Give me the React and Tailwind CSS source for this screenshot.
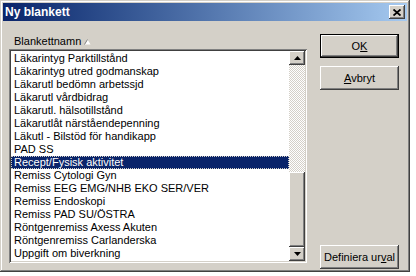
import React from "react";

const items = [
  "Läkarintyg Parktillstånd",
  "Läkarintyg utred godmanskap",
  "Läkarutl bedömn arbetssjd",
  "Läkarutl vårdbidrag",
  "Läkarutl. hälsotillstånd",
  "Läkarutlåt närståendepenning",
  "Läkutl - Bilstöd för handikapp",
  "PAD SS",
  "Recept/Fysisk aktivitet",
  "Remiss Cytologi Gyn",
  "Remiss EEG EMG/NHB EKO SER/VER",
  "Remiss Endoskopi",
  "Remiss PAD SU/ÖSTRA",
  "Röntgenremiss Axess Akuten",
  "Röntgenremiss Carlanderska",
  "Uppgift om biverkning",
];

const raised =
  "bg-[#d4d0c8] shadow-[inset_-1px_-1px_#404040,inset_1px_1px_#fff,inset_-2px_-2px_#808080,inset_2px_2px_#d4d0c8]";

const Button = ({ children, isDefault }) => (
  <div className={isDefault ? "h-[24px] border border-black" : "h-[24px]"}>
    <div
      className={`${raised} h-full flex items-center justify-center text-[11px] text-black`}
    >
      {children}
    </div>
  </div>
);

const Arrow = ({ up }) => (
  <svg width="7" height="4" viewBox="0 0 7 4">
    <polygon points={up ? "3.5,0 7,4 0,4" : "0,0 7,0 3.5,4"} fill="#000" />
  </svg>
);

export default function App() {
  return (
    <div
      className="w-[416px] h-[276px] bg-white"
      style={{ fontFamily: '"Liberation Sans", Arial, sans-serif' }}
    >
      {/* Window */}
      <div className="w-[410px] h-[272px] p-[3px] bg-[#d4d0c8] shadow-[inset_-1px_-1px_#404040,inset_1px_1px_#d4d0c8,inset_-2px_-2px_#808080,inset_2px_2px_#fff] flex flex-col">
        {/* Title bar */}
        <div className="h-[18px] flex items-center justify-between pl-[2px] pr-[2px] bg-gradient-to-r from-[#0a246a] to-[#a6caf0]">
          <span className="text-[12px] font-bold text-white leading-none">
            Ny blankett
          </span>
          <div className={`${raised} w-[16px] h-[14px] flex items-center justify-center`}>
            <svg width="8" height="7" viewBox="0 0 8 7">
              <path d="M0.5 0.5 L7.5 6.5 M7.5 0.5 L0.5 6.5" stroke="#000" strokeWidth="1.8" />
            </svg>
          </div>
        </div>

        {/* Body */}
        <div className="flex-1 flex gap-[13px] pl-[6px] pt-[13px]">
          <div className="flex flex-col w-[298px]">
            <div className="h-[15px] flex items-center pl-[5px] gap-[3px] text-[11px] text-black">
              <span>Blankettnamn</span>
              <svg width="7" height="6" viewBox="0 0 7 6">
                <polygon points="3.5,0.5 6.5,5.5 0.5,5.5" fill="#fff" />
                <path d="M3.5 0.5 L0.5 5.5" stroke="#808080" strokeWidth="1" />
              </svg>
            </div>

            {/* List box */}
            <div className="h-[214px] p-[2px] bg-white shadow-[inset_1px_1px_#808080,inset_-1px_-1px_#fff,inset_2px_2px_#404040,inset_-2px_-2px_#d4d0c8] flex">
              <div className="flex-1 pt-[1px] overflow-hidden">
                {items.map((item) => {
                  const selected = item === "Recept/Fysisk aktivitet";
                  return (
                    <div
                      key={item}
                      className={`h-[13px] flex items-center pl-[3px] text-[11px] whitespace-nowrap ${
                        selected
                          ? "bg-[#0a246a] text-white outline-1 outline-dotted outline-[#d4d0c8] -outline-offset-1"
                          : "text-black"
                      }`}
                    >
                      {item}
                    </div>
                  );
                })}
              </div>

              {/* Scrollbar */}
              <div className="w-[16px] flex flex-col bg-[repeating-conic-gradient(#fff_0_25%,#d4d0c8_0_50%)] bg-[length:2px_2px]">
                <div className={`${raised} h-[14px] flex items-center justify-center`}>
                  <Arrow up />
                </div>
                <div className="h-[107px]" />
                <div className={`${raised} h-[75px]`} />
                <div className={`${raised} h-[14px] flex items-center justify-center`}>
                  <Arrow />
                </div>
              </div>
            </div>
          </div>

          {/* Buttons */}
          <div className="w-[79px] flex flex-col">
            <Button isDefault>
              O<span className="underline">K</span>
            </Button>
            <div className="mt-[8px]">
              <Button>
                <span className="underline">A</span>vbryt
              </Button>
            </div>
            <div className="mt-auto">
              <Button>
                Definiera ur<span className="underline">v</span>al
              </Button>
            </div>
          </div>
        </div>
      </div>
    </div>
  );
}
